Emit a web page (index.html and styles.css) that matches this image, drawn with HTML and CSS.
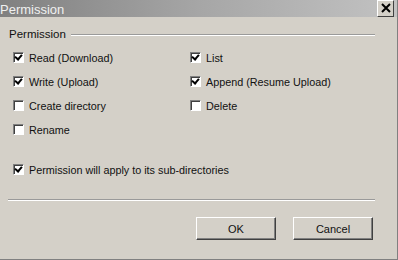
FILE: index.html
```html
<!DOCTYPE html>
<html lang="en">
<head>
    <meta charset="UTF-8">
    <title>Permission</title>
    <link rel="stylesheet" href="styles.css">
</head>
<body>
<div class="dialog">
    <div class="titlebar">
        <span class="title">Permission</span>
        <span class="close">
            <svg width="10" height="10" viewBox="0 0 10 10"><path d="M1 1 L9 9 M9 1 L1 9" stroke="#000" stroke-width="2"/></svg>
        </span>
    </div>
    <div class="content">
        <div class="group-label">
            <span>Permission</span>
            <div class="group-line"></div>
        </div>
        <div class="grid">
            <label class="check"><span class="box checked"></span>Read (Download)</label>
            <label class="check"><span class="box checked"></span>List</label>
            <label class="check"><span class="box checked"></span>Write (Upload)</label>
            <label class="check"><span class="box checked"></span>Append (Resume Upload)</label>
            <label class="check"><span class="box"></span>Create directory</label>
            <label class="check"><span class="box"></span>Delete</label>
            <label class="check"><span class="box"></span>Rename</label>
        </div>
        <label class="check sub"><span class="box checked"></span>Permission will apply to its sub-directories</label>
        <div class="separator"></div>
        <div class="buttons">
            <button>OK</button>
            <button>Cancel</button>
        </div>
    </div>
</div>
</body>
</html>
```

FILE: styles.css
```css
body {
    margin: 0;
    font-family: "Liberation Sans", Arial, sans-serif;
    font-size: 11px;
    color: #111;
    background-color: #d4d0c8;
}

.dialog {
    width: 397px;
    height: 259px;
    background-color: #d4d0c8;
    border-right: 1px solid #808080;
    border-bottom: 1px solid #808080;
    display: flex;
    flex-direction: column;
}

.titlebar {
    height: 17px;
    display: flex;
    align-items: center;
    justify-content: space-between;
    background: linear-gradient(to right, #808080, #a6a6a6 50%, #c2c2c2);
}

.title {
    color: #f0f0f0;
    font-size: 13px;
    margin-left: 0;
    margin-top: 1px;
}

.close {
    width: 15px;
    height: 15px;
    margin-right: 3px;
    margin-top: -1px;
    background-color: #d4d0c8;
    border: 1px solid;
    border-color: #fff #404040 #404040 #fff;
    display: flex;
    align-items: center;
    justify-content: center;
}

.content {
    padding: 11px 22px 0 8px;
    display: flex;
    flex-direction: column;
}

.group-label {
    display: flex;
    align-items: center;
    padding-left: 1px;
    font-size: 11.5px;
}

.group-line {
    flex: 1;
    margin-left: 5px;
    margin-top: 1px;
    border-top: 1px solid #9a9a9a;
    border-bottom: 1px solid #fff;
}

.grid {
    display: grid;
    grid-template-columns: 177px 1fr;
    row-gap: 11px;
    padding: 11px 0 0 5px;
}

.check {
    display: flex;
    align-items: center;
    height: 13px;
    font-size: 10.8px;
}

.box {
    width: 9px;
    height: 9px;
    margin-right: 5px;
    background-color: #fff;
    border: 1px solid;
    border-color: #808080 #fff #fff #808080;
    box-shadow: inset 1px 1px 0 #404040;
    position: relative;
}

.box.checked::after {
    content: "";
    position: absolute;
    left: 2px;
    top: 0px;
    width: 3px;
    height: 5px;
    border: solid #000;
    border-width: 0 2px 2px 0;
    transform: rotate(40deg);
}

.sub {
    margin: 27px 0 0 5px;
}

.separator {
    margin-top: 23px;
    border-top: 1px solid #9a9a9a;
    border-bottom: 1px solid #fff;
}

.buttons {
    display: flex;
    justify-content: flex-end;
    gap: 17px;
    margin-top: 16px;
    padding-right: 2px;
}

button {
    width: 80px;
    height: 23px;
    font-family: "Liberation Sans", Arial, sans-serif;
    font-size: 11px;
    color: #111;
    background-color: #d4d0c8;
    border: 1px solid;
    border-color: #fff #404040 #404040 #fff;
    box-shadow: inset -1px -1px 0 #808080;
    padding: 0;
}
```
